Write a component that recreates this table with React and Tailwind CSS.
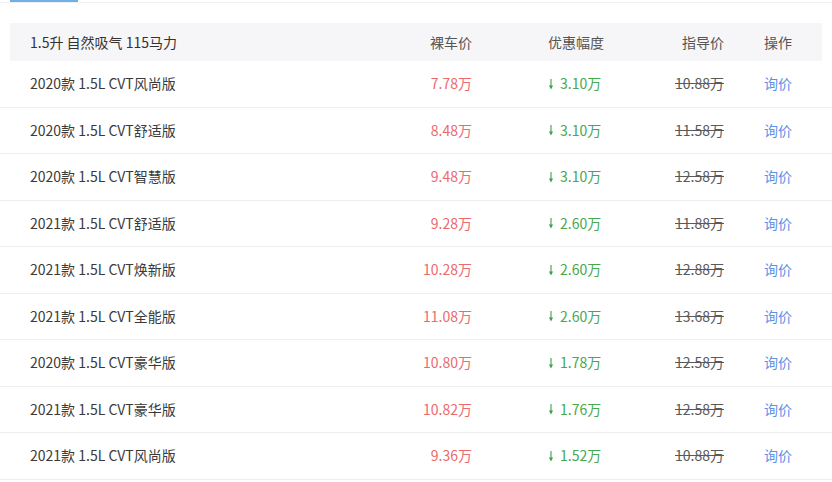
import React from "react";

const rows = [
  { name: "2020款 1.5L CVT风尚版", price: "7.78万", cut: "3.10万", guide: "10.88万" },
  { name: "2020款 1.5L CVT舒适版", price: "8.48万", cut: "3.10万", guide: "11.58万" },
  { name: "2020款 1.5L CVT智慧版", price: "9.48万", cut: "3.10万", guide: "12.58万" },
  { name: "2021款 1.5L CVT舒适版", price: "9.28万", cut: "2.60万", guide: "11.88万" },
  { name: "2021款 1.5L CVT焕新版", price: "10.28万", cut: "2.60万", guide: "12.88万" },
  { name: "2021款 1.5L CVT全能版", price: "11.08万", cut: "2.60万", guide: "13.68万" },
  { name: "2020款 1.5L CVT豪华版", price: "10.80万", cut: "1.78万", guide: "12.58万" },
  { name: "2021款 1.5L CVT豪华版", price: "10.82万", cut: "1.76万", guide: "12.58万" },
  { name: "2021款 1.5L CVT风尚版", price: "9.36万", cut: "1.52万", guide: "10.88万" },
];

const font = { fontFamily: '"Noto Sans CJK SC", "Noto Sans", sans-serif' };

// small green down arrow before the discount
const DownArrow = () => (
  <svg width="6" height="12" viewBox="0 0 6 12" className="mr-[6px]">
    <line x1="3" y1="1" x2="3" y2="9" stroke="#3f9f48" strokeWidth="1.1" />
    <path d="M0.9 7.6 L3 11.4 L5.1 7.6 Z" fill="#3f9f48" />
  </svg>
);

const Row = ({ r }) => (
  <div className="h-[46.5px] border-b border-[#eeeef0] px-[10px] flex items-center text-[14px]">
    <div className="w-[390px] pl-[20px] text-[#3a3a3a]">{r.name}</div>
    <div className="w-[72px] text-right text-[#ec6a6d]">{r.price}</div>
    <div className="w-[176px] pl-[76px] flex items-center text-[#46a84f]">
      <DownArrow />
      {r.cut}
    </div>
    <div className="w-[76px] text-right text-[#5a5a5a] line-through">{r.guide}</div>
    <div className="pl-[40px] text-[#5d90e8]">询价</div>
  </div>
);

export default function App() {
  return (
    <div className="w-[832px] h-[482px] bg-white overflow-hidden" style={font}>
      {/* tab bar */}
      <div className="h-[3px] px-[10px] flex items-start border-b border-[#f0f0f2]">
        <div className="w-[68px] h-[2px] bg-[#6fb0e6]" />
      </div>

      <div className="pt-[20px]">
        {/* header */}
        <div className="mx-[10px] h-[38px] bg-[#f6f6f8] flex items-center text-[14px] text-[#333]">
          <div className="w-[390px] pl-[20px]">1.5升 自然吸气 115马力</div>
          <div className="w-[72px] text-right text-[#555]">裸车价</div>
          <div className="w-[176px] pl-[76px] text-[#555]">优惠幅度</div>
          <div className="w-[76px] text-right text-[#555]">指导价</div>
          <div className="pl-[40px] text-[#555]">操作</div>
        </div>

        {rows.map((r, i) => (
          <Row key={i} r={r} />
        ))}
      </div>
    </div>
  );
}
